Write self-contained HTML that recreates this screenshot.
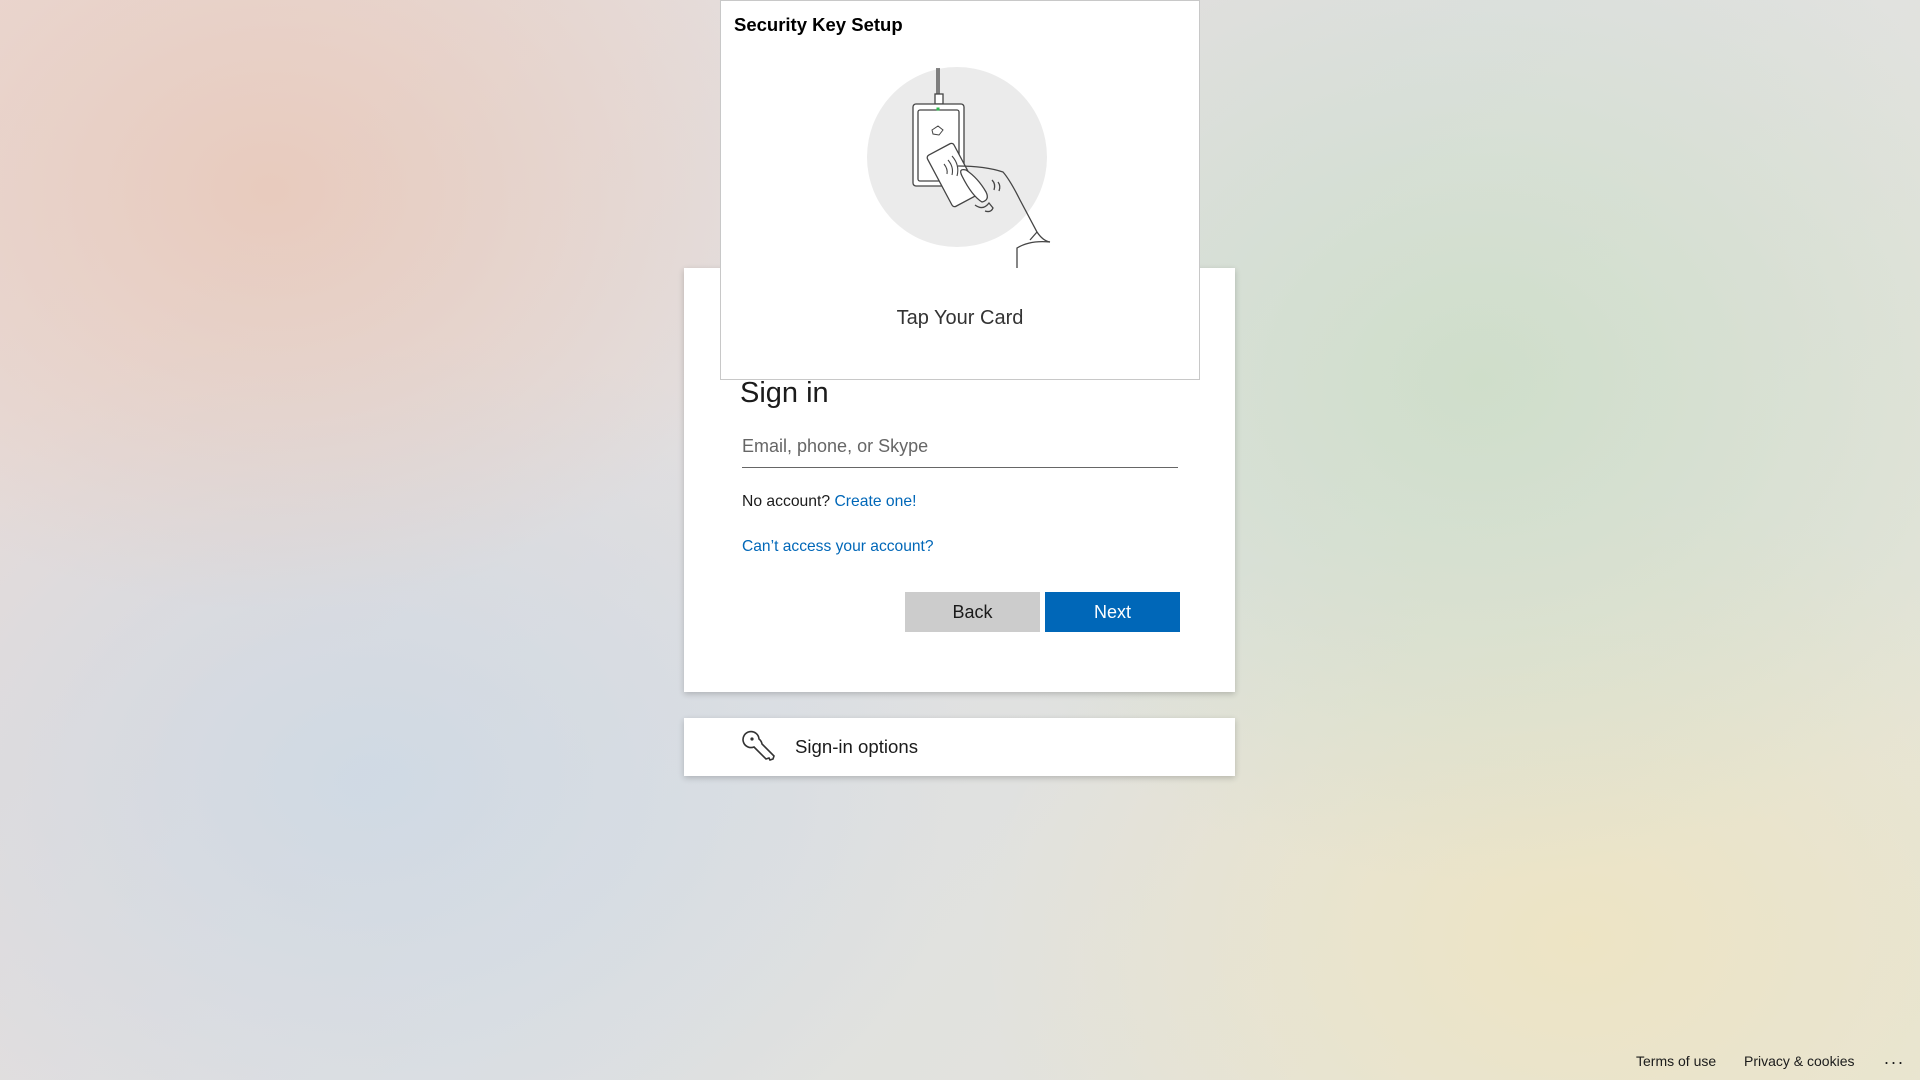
<!DOCTYPE html>
<html><head><meta charset="utf-8">
<style>
html,body{margin:0;padding:0;width:1920px;height:1080px;overflow:hidden;font-family:"Liberation Sans",sans-serif;}
body{position:relative;background:
radial-gradient(ellipse 520px 420px at 270px 190px, rgba(232,200,185,0.85), rgba(232,200,185,0) 100%),
radial-gradient(ellipse 600px 450px at 370px 780px, rgba(203,216,229,0.8), rgba(203,216,229,0) 100%),
radial-gradient(ellipse 600px 500px at 1480px 380px, rgba(205,222,200,0.9), rgba(205,222,200,0) 100%),
radial-gradient(ellipse 600px 450px at 1580px 940px, rgba(238,228,195,0.95), rgba(238,228,195,0) 100%),
linear-gradient(135deg,#ead9d4 0%,#dfe0e2 50%,#e6e6d6 100%);}
.abs{position:absolute}
.card{position:absolute;left:684px;top:268px;width:551px;height:424px;background:#fff;box-shadow:0 2px 6px rgba(0,0,0,0.2)}
.opts{position:absolute;left:684px;top:718px;width:551px;height:58px;background:#fff;box-shadow:0 2px 6px rgba(0,0,0,0.2)}
.popup{position:absolute;left:720px;top:0;width:478px;height:378px;background:#fff;border:1px solid #c8c8c8}
</style></head><body>
<div class="card"></div>
<div class="opts"></div>
<div class="abs" style="left:740px;top:377px;font-size:29px;color:#1b1b1b">Sign in</div>
<div class="abs" style="left:742px;top:436px;font-size:18px;color:#666">Email, phone, or Skype</div>
<div class="abs" style="left:742px;top:467px;width:436px;height:1px;background:#666"></div>
<div class="abs" style="left:742px;top:493px;font-size:15.7px;color:#1b1b1b">No account? <span style="color:#0067b8">Create one!</span></div>
<div class="abs" style="left:742px;top:538px;font-size:15.6px;color:#0067b8">Can’t access your account?</div>
<div class="abs" style="left:905px;top:592px;width:135px;height:40px;background:#ccc;color:#1b1b1b;font-size:18px;text-align:center;line-height:40px">Back</div>
<div class="abs" style="left:1045px;top:592px;width:135px;height:40px;background:#0067b8;color:#fff;font-size:18px;text-align:center;line-height:40px">Next</div>
<svg class="abs" style="left:740px;top:725px" width="40" height="40" viewBox="0 0 40 40" fill="none" stroke="#333" stroke-width="1.6">
<path d="M19 14 A8 8 0 1 0 14 22 L26 34 L29 33 L30 35 L33 34 L34 31 L22 19 A8 8 0 0 0 19 14 Z"/>
<circle cx="12" cy="14" r="1.6" fill="#333" stroke="none"/>
</svg>
<div class="abs" style="left:795px;top:736px;font-size:18.6px;color:#1b1b1b">Sign-in options</div>

<div class="popup"></div>
<div class="abs" style="left:734px;top:14px;font-size:18.5px;font-weight:bold;color:#000">Security Key Setup</div>
<svg class="abs" style="left:0;top:0" width="1920" height="300" fill="none" stroke="#444" stroke-width="1.3">
<circle cx="957" cy="157" r="90" fill="#ebebeb" stroke="none"/>
<line x1="939" y1="68" x2="939" y2="95"/>
<line x1="937" y1="68" x2="937" y2="95"/>
<rect x="935" y="94" width="8" height="10" fill="#fff"/>
<rect x="913" y="104" width="51" height="82" rx="3" fill="#fff"/>
<rect x="918" y="110" width="41" height="71" rx="2" fill="#fff"/>
<rect x="936.5" y="107.5" width="3" height="3" fill="#2db84d" stroke="none"/>
<path d="M932 130 l6 -4 l5 4 l-4 5 l-6 -1z" stroke-width="1"/>
<g transform="rotate(-28 953 175)">
<rect x="938" y="146" width="30" height="58" rx="3" fill="#fff"/>
</g>
<path d="M944 164 q4 5 3 10 M948 160 q6 7 4 15 M952 156 q8 9 5 20" stroke-width="1.1"/>
<path d="M958 166 Q985 166 1003 172 Q1010 180 1020 200 L1037 232 Q1043 241 1050 242" fill="none"/>
<path d="M1050 242 Q1030 240 1017 248 L1017 268" fill="none"/>
<path d="M1037 232 L1030 240"/>
<path d="M962 176 Q958 168 966 170 Q978 178 986 192 Q990 200 982 202 Q972 196 962 176 Z" fill="#fff"/>
<path d="M975 205 q8 6 14 -2 l4 5 q-2 5 -8 3 M992 180 q4 4 2 10 M998 182 q3 4 1 9" fill="none"/>
</svg>
<div class="abs" style="left:720px;top:307px;width:480px;text-align:center;font-size:20px;color:#333">Tap Your Card</div>

<div class="abs" style="left:1636px;top:1053px;font-size:14px;color:#1b1b1b">Terms of use</div>
<div class="abs" style="left:1744px;top:1053px;font-size:14px;color:#1b1b1b">Privacy &amp; cookies</div>
<div class="abs" style="left:1884px;top:1048px;font-size:18px;color:#1b1b1b;letter-spacing:2px">...</div>
</body></html>
